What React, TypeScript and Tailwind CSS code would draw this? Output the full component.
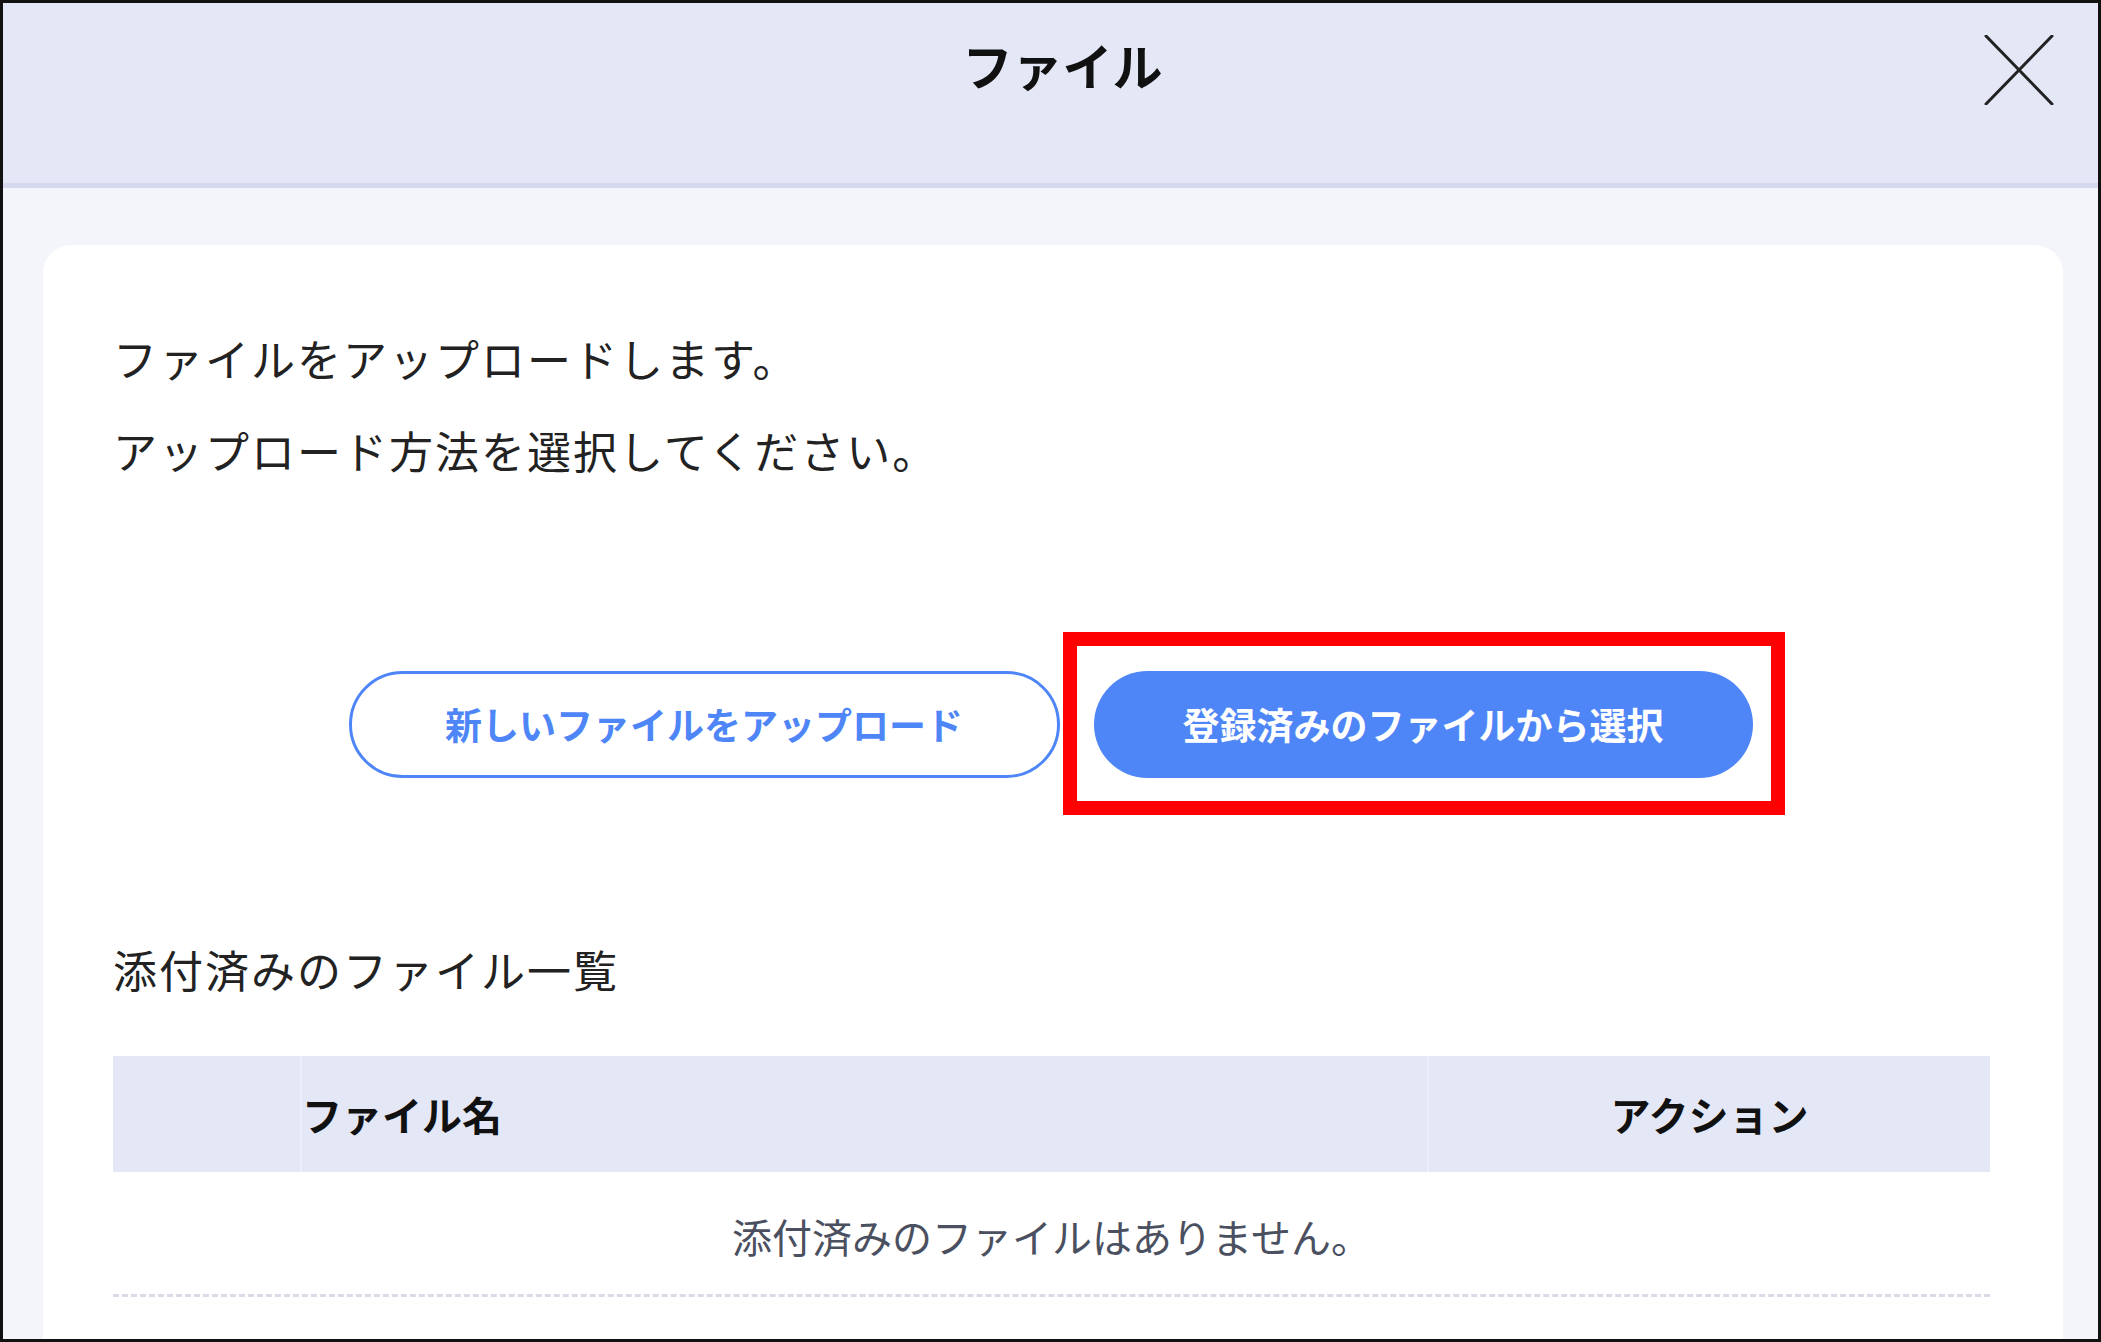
import React from "react";

const font = { fontFamily: "'Noto Sans CJK JP', 'Noto Sans', sans-serif" };

export default function App() {
  return (
    <div
      className="w-[2101px] h-[1342px] border-[3px] border-[#111] overflow-hidden flex flex-col bg-[#f4f5fa]"
      style={font}
    >
      {/* Header */}
      <div className="h-[185px] shrink-0 bg-[#e4e8f6] border-b-[5px] border-[#d6d9ee] grid grid-cols-[1fr_auto_1fr]">
        <div />
        <h1 className="mt-[26px] ml-[24px] text-[50px] leading-[70px] font-bold text-[#111] tracking-[0px]">
          ファイル
        </h1>
        <div className="flex justify-end items-start pr-[44px] pt-[32px]">
          <button className="w-[70px] h-[70px] flex items-center justify-center" aria-label="close">
            <svg width="70" height="70" viewBox="0 0 70 70" fill="none">
              <path d="M2 1 L68 69 M68 1 L2 69" stroke="#222" strokeWidth="3" strokeLinecap="round" />
            </svg>
          </button>
        </div>
      </div>

      {/* Body */}
      <div className="flex-1 pt-[57px] pl-[40px] pr-[35px]">
        <div className="bg-white rounded-t-[28px] h-full pt-[67px] pl-[70px] pr-[73px]">
          <p className="text-[44px] leading-[92px] tracking-[2px] text-[#222]">ファイルをアップロードします。</p>
          <p className="text-[44px] leading-[92px] tracking-[2px] text-[#222]">アップロード方法を選択してください。</p>

          <div className="flex justify-center gap-[34px] mt-[175px] pr-[2px]">
            <button className="w-[711px] h-[107px] rounded-full border-[3px] border-[#4f86f7] bg-white text-[#4f86f7] text-[37px] font-bold flex items-center justify-center">
              新しいファイルをアップロード
            </button>
            <div className="relative">
              <button className="w-[659px] h-[107px] rounded-full bg-[#4f86f7] text-white text-[37px] font-bold flex items-center justify-center">
                登録済みのファイルから選択
              </button>
              <div className="absolute left-[-31px] right-[-32px] top-[-39px] bottom-[-37px] border-[14px] border-[#ff0000] pointer-events-none" />
            </div>
          </div>

          <h2 className="mt-[161px] text-[44px] leading-[60px] tracking-[2px] text-[#222]">添付済みのファイル一覧</h2>

          <div className="mt-[57px]">
            <div className="grid grid-cols-[187px_1127px_1fr] h-[116px] bg-[#e4e8f6]">
              <div />
              <div className="border-l-2 border-[#eceff9] flex items-center text-[40px] font-bold text-[#111]">
                ファイル名
              </div>
              <div className="border-l-2 border-[#eceff9] flex items-center justify-center text-[40px] font-bold text-[#111]">
                アクション
              </div>
            </div>
            <div className="pt-[34px] pb-[28px] border-b-[3px] border-dashed border-[#d9dce6] text-center text-[40px] leading-[60px] text-[#4b5060]">
              添付済みのファイルはありません。
            </div>
          </div>
        </div>
      </div>
    </div>
  );
}
